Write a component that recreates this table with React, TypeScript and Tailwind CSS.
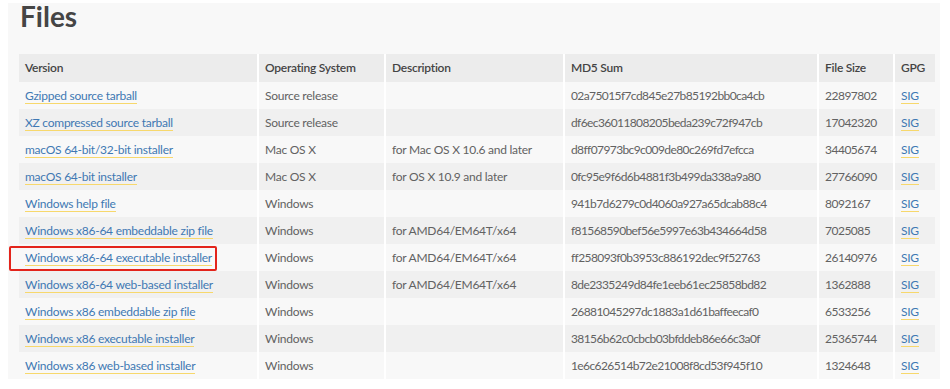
const rows = [
  { name: 'Gzipped source tarball', os: 'Source release', desc: '', md5: '02a75015f7cd845e27b85192bb0ca4cb', size: '22897802' },
  { name: 'XZ compressed source tarball', os: 'Source release', desc: '', md5: 'df6ec36011808205beda239c72f947cb', size: '17042320' },
  { name: 'macOS 64-bit/32-bit installer', os: 'Mac OS X', desc: 'for Mac OS X 10.6 and later', md5: 'd8ff07973bc9c009de80c269fd7efcca', size: '34405674' },
  { name: 'macOS 64-bit installer', os: 'Mac OS X', desc: 'for OS X 10.9 and later', md5: '0fc95e9f6d6b4881f3b499da338a9a80', size: '27766090' },
  { name: 'Windows help file', os: 'Windows', desc: '', md5: '941b7d6279c0d4060a927a65dcab88c4', size: '8092167' },
  { name: 'Windows x86-64 embeddable zip file', os: 'Windows', desc: 'for AMD64/EM64T/x64', md5: 'f81568590bef56e5997e63b434664d58', size: '7025085' },
  { name: 'Windows x86-64 executable installer', os: 'Windows', desc: 'for AMD64/EM64T/x64', md5: 'ff258093f0b3953c886192dec9f52763', size: '26140976', marked: true },
  { name: 'Windows x86-64 web-based installer', os: 'Windows', desc: 'for AMD64/EM64T/x64', md5: '8de2335249d84fe1eeb61ec25858bd82', size: '1362888' },
  { name: 'Windows x86 embeddable zip file', os: 'Windows', desc: '', md5: '26881045297dc1883a1d61baffeecaf0', size: '6533256' },
  { name: 'Windows x86 executable installer', os: 'Windows', desc: '', md5: '38156b62c0cbcb03bfddeb86e66c3a0f', size: '25365744' },
  { name: 'Windows x86 web-based installer', os: 'Windows', desc: '', md5: '1e6c626514b72e21008f8cd53f945f10', size: '1324648' },
];

// column widths include the 2px white divider on the right
const cols = 'grid grid-cols-[240px_127px_179px_254px_76px_40px]';
const cell = 'flex items-center pl-[6px] border-r-2 border-white whitespace-nowrap';
const link = 'text-[#3f78b3] border-b border-[#f7d86c] leading-[15px]';

const App = () => {
  return (
    <div className="w-[950px] h-[389px] bg-white pt-[3px] pl-[8px] font-['Lato','Liberation_Sans',sans-serif]">
      <div className="w-[932px] h-[376px] bg-[#f8f8f8] pl-[11px]">
        {/* Title */}
        <h1 className="pl-[1px] text-[28px] leading-[26px] font-bold text-[#454545] h-[51px]">
          Files
        </h1>

        {/* Table */}
        <div className="w-[916px] text-[12px] tracking-[-0.25px]">
          <div className={`${cols} h-[28px] bg-[#ececec] text-[#444] font-semibold`}>
            <div className={cell}>Version</div>
            <div className={cell}>Operating System</div>
            <div className={cell}>Description</div>
            <div className={cell}>MD5 Sum</div>
            <div className={cell}>File Size</div>
            <div className="flex items-center pl-[6px]">GPG</div>
          </div>

          {rows.map((r, i) => (
            <div
              key={r.md5}
              className={`${cols} relative h-[27px] text-[#626262] ${i % 2 === 0 ? 'bg-[#f8f8f8]' : 'bg-[#f0f0f0]'}`}
            >
              <div className={cell}>
                <a className={link}>{r.name}</a>
              </div>
              <div className={cell}>{r.os}</div>
              <div className={cell}>{r.desc}</div>
              <div className={`${cell} tracking-[-0.6px]`}>{r.md5}</div>
              <div className={`${cell} tracking-[-0.5px]`}>{r.size}</div>
              <div className="flex items-center pl-[6px]">
                <a className={link}>SIG</a>
              </div>
              {r.marked && (
                <div className="absolute left-[-10px] top-[2px] w-[208px] h-[25px] border-2 border-[#e3241b] rounded-[2px] pointer-events-none" />
              )}
            </div>
          ))}
        </div>
      </div>
    </div>
  );
};

export default App;
